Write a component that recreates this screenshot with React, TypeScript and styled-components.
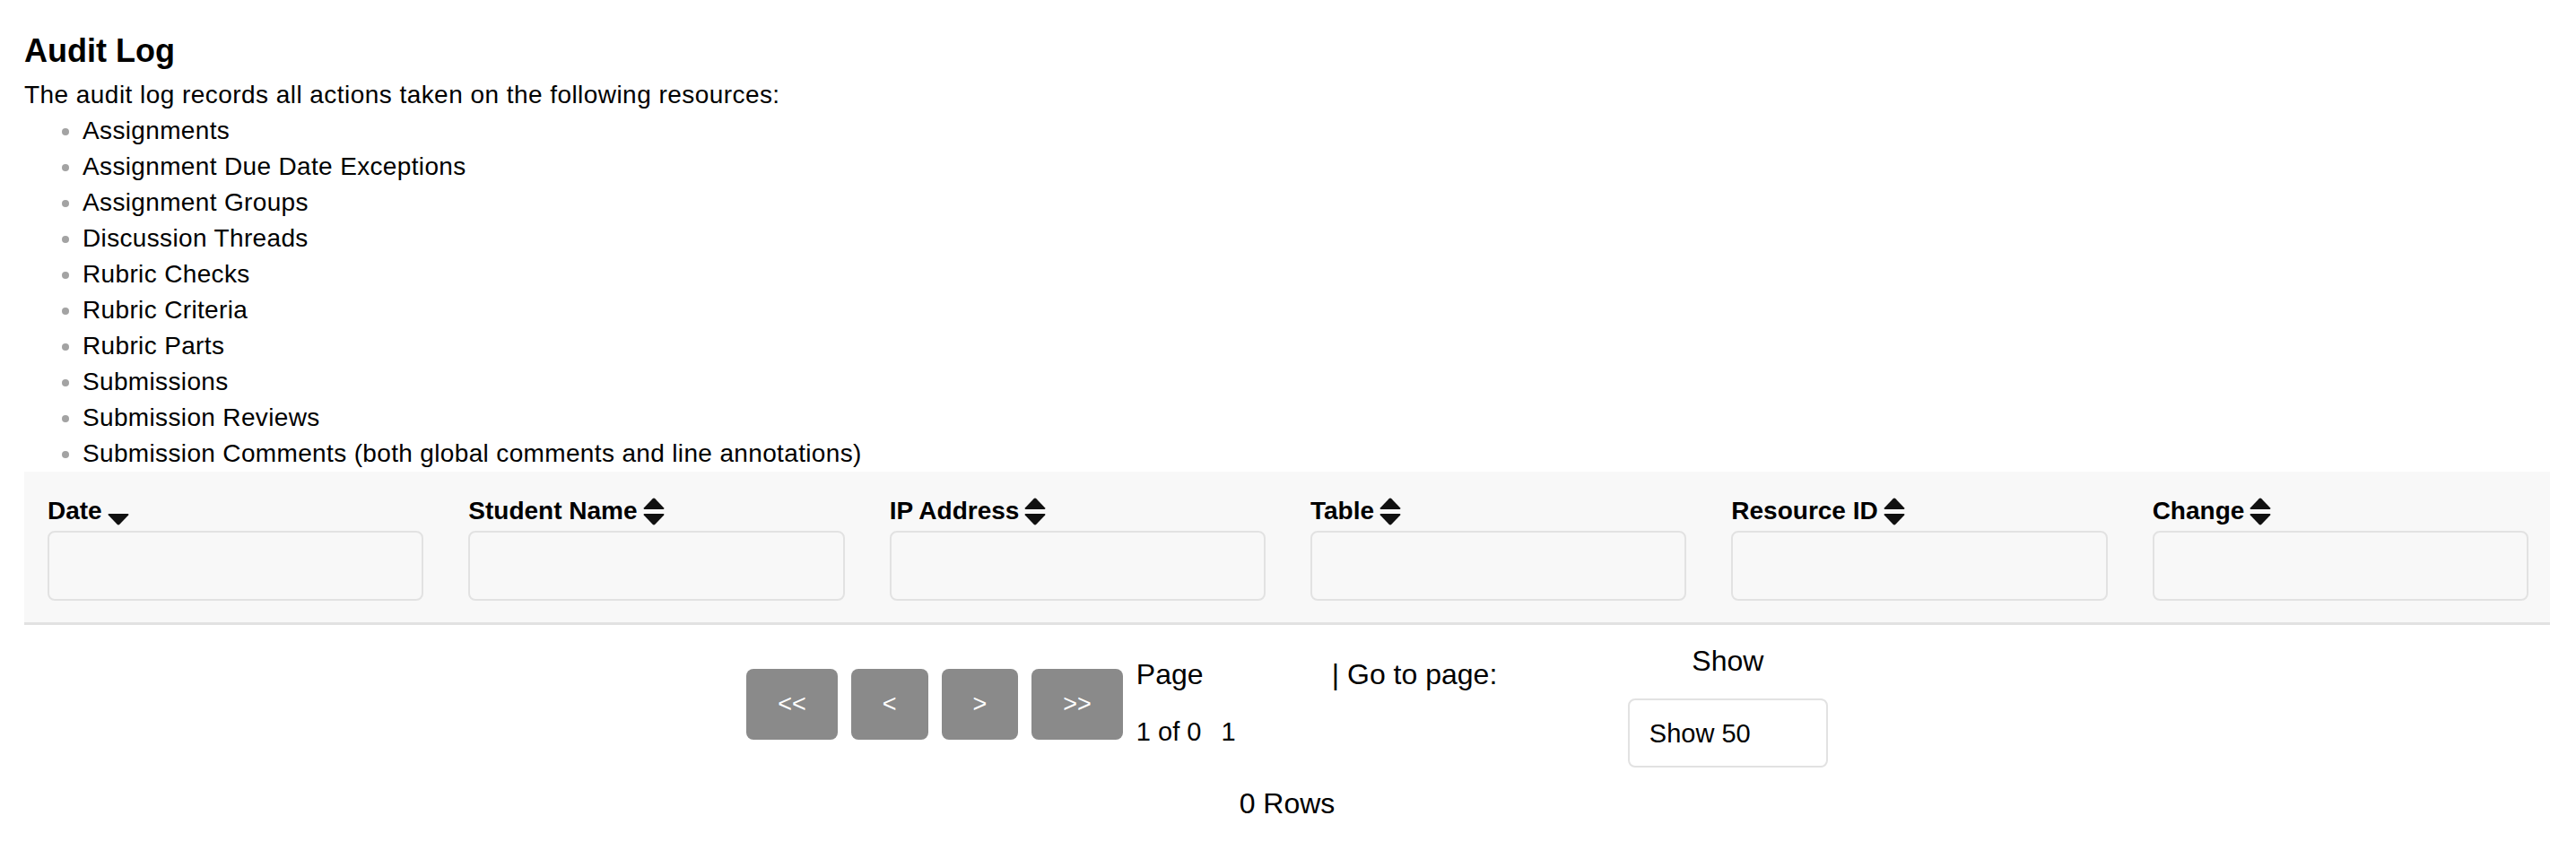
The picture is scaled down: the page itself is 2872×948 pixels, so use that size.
import React from "react";
import styled, { createGlobalStyle } from "styled-components";

const GlobalStyle = createGlobalStyle`
  html, body {
    margin: 0;
    padding: 0;
    background: #ffffff;
  }
  body {
    font-family: "Liberation Sans", Arial, sans-serif;
    color: #000;
  }
`;

const Page = styled.div`
  padding: 35px 29px 0 27px;
`;

const Title = styled.h2`
  margin: 0;
  font-size: 36px;
  line-height: 44px;
  font-weight: bold;
`;

const Intro = styled.p`
  margin: 7px 0 0;
  font-size: 28px;
  line-height: 40px;
  letter-spacing: 0.45px;
`;

const ResourceList = styled.ul`
  margin: 0;
  padding-left: 65px;
  font-size: 28px;
  line-height: 40px;
  letter-spacing: 0.35px;
  li::marker {
    color: #a3a3a3;
  }
`;

const Table = styled.table`
  width: 100%;
  table-layout: fixed;
  border-collapse: collapse;
  background: #f8f8f8;
  border-bottom: 3px solid #e2e2e2;
`;

const HeadCell = styled.th`
  text-align: left;
  vertical-align: top;
  padding: 24px 24px 24px 26px;
  font-size: 28px;
  line-height: 40px;
  font-weight: bold;
`;

const HeadLabel = styled.div`
  display: flex;
  align-items: center;
  gap: 6px;
  height: 40px;
`;

const FilterInput = styled.input`
  display: block;
  box-sizing: border-box;
  width: 100%;
  height: 78px;
  margin-top: 2px;
  background: #f8f8f8;
  border: 2px solid #e2e2e2;
  border-radius: 8px;
  font-size: 28px;
  font-family: inherit;
  outline: none;
`;

const Pager = styled.div`
  display: flex;
  justify-content: center;
  align-items: flex-start;
  margin-top: 20px;
  font-size: 32px;
  line-height: 40px;
`;

const NavButtons = styled.div`
  display: flex;
  gap: 15px;
  margin-top: 29px;
`;

const NavButton = styled.button`
  height: 79px;
  padding: 0 35px;
  background: #8a8a8a;
  color: #ffffff;
  border: none;
  border-radius: 8px;
  font-family: inherit;
  font-size: 27px;
`;

const PageInfo = styled.div`
  display: flex;
  flex-direction: column;
  gap: 24px;
  width: 218px;
  margin: 15px 0 0 15px;
`;

const PageCount = styled.div`
  font-size: 29px;
`;

const PageNumber = styled.span`
  margin-left: 22px;
`;

const GoTo = styled.div`
  width: 330px;
  margin-top: 15px;
`;

const ShowBlock = styled.div`
  display: flex;
  flex-direction: column;
  align-items: center;
  gap: 22px;
`;

const ShowSelect = styled.div`
  box-sizing: border-box;
  width: 223px;
  height: 77px;
  padding: 0 22px;
  display: flex;
  align-items: center;
  border: 2px solid #e2e2e2;
  border-radius: 8px;
  background: #fff;
  font-size: 29px;
`;

const RowCount = styled.div`
  margin-top: 20px;
  text-align: center;
  font-size: 32px;
  line-height: 40px;
`;

const SortIcon = ({ only }: { only?: "down" }) => (
  <svg width="24" height="31" viewBox="0 0 24 31">
    {only !== "down" && (
      <path d="M10.6 1.2 Q12 0 13.4 1.2 L23.2 11.6 Q24 13 22.4 13 L1.6 13 Q0 13 0.8 11.6 Z" fill="#111" />
    )}
    <path d="M1.6 18 L22.4 18 Q24 18 23.2 19.4 L13.4 29.8 Q12 31 10.6 29.8 L0.8 19.4 Q0 18 1.6 18 Z" fill="#111" />
  </svg>
);

const resources = [
  "Assignments",
  "Assignment Due Date Exceptions",
  "Assignment Groups",
  "Discussion Threads",
  "Rubric Checks",
  "Rubric Criteria",
  "Rubric Parts",
  "Submissions",
  "Submission Reviews",
  "Submission Comments (both global comments and line annotations)",
];

const columns = [
  { label: "Date", sorted: true },
  { label: "Student Name" },
  { label: "IP Address" },
  { label: "Table" },
  { label: "Resource ID" },
  { label: "Change" },
];

export default function App() {
  return (
    <Page>
      <GlobalStyle />
      <Title>Audit Log</Title>
      <Intro>The audit log records all actions taken on the following resources:</Intro>
      <ResourceList>
        {resources.map((r) => (
          <li key={r}>{r}</li>
        ))}
      </ResourceList>

      <Table>
        <thead>
          <tr>
            {columns.map((c) => (
              <HeadCell key={c.label}>
                <HeadLabel>
                  {c.label}
                  <SortIcon only={c.sorted ? "down" : undefined} />
                </HeadLabel>
                <FilterInput />
              </HeadCell>
            ))}
          </tr>
        </thead>
      </Table>

      <Pager>
        <NavButtons>
          <NavButton>{"<<"}</NavButton>
          <NavButton>{"<"}</NavButton>
          <NavButton>{">"}</NavButton>
          <NavButton>{">>"}</NavButton>
        </NavButtons>
        <PageInfo>
          <span>Page</span>
          <PageCount>
            <span>1 of 0</span>
            <PageNumber>1</PageNumber>
          </PageCount>
        </PageInfo>
        <GoTo>| Go to page:</GoTo>
        <ShowBlock>
          <span>Show</span>
          <ShowSelect>Show 50</ShowSelect>
        </ShowBlock>
      </Pager>
      <RowCount>0 Rows</RowCount>
    </Page>
  );
}
